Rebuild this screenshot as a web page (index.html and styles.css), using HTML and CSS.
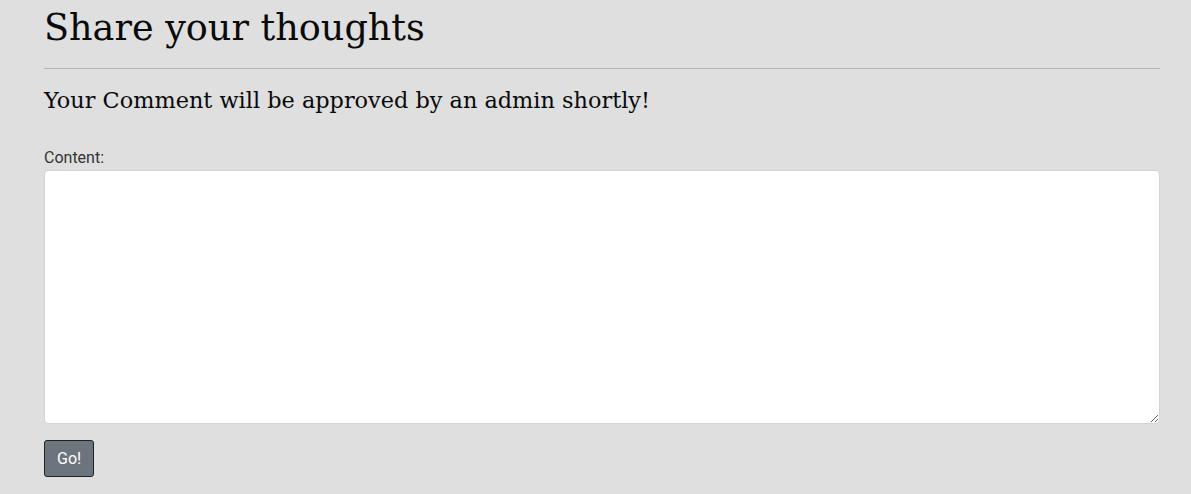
FILE: index.html
```html
<!DOCTYPE html>
<html>
<head>
<meta charset="utf-8">
<link rel="stylesheet" href="styles.css">
</head>
<body>
<div class="container">
  <h1 class="title">Share your thoughts</h1>
  <hr class="rule">
  <h4 class="subtitle">Your Comment will be approved by an admin shortly!</h4>
  <form class="form">
    <label class="label" for="content">Content:</label>
    <textarea id="content" class="textarea"></textarea>
    <button type="button" class="btn">Go!</button>
  </form>
</div>
</body>
</html>
```
FILE: styles.css
```css
html, body {
  margin: 0;
  padding: 0;
  background: #dfdfdf;
}
.container {
  padding: 0 31px 0 44px;
}
.title {
  font-family: "DejaVu Serif", serif;
  font-weight: 400;
  font-size: 36.6px;
  line-height: 44px;
  color: #0a0a0a;
  margin: 6px 0 0 0;
}
.rule {
  border: 0;
  border-top: 1px solid #b3b3b3;
  margin: 18px 0 0 0;
}
.subtitle {
  font-family: "DejaVu Serif", serif;
  font-weight: 400;
  font-size: 22.4px;
  line-height: 1.2;
  color: #0a0a0a;
  margin: 18px 0 34px 0;
}
.form {
  display: flex;
  flex-direction: column;
  align-items: flex-start;
}
.label {
  font-family: Roboto, "Liberation Sans", sans-serif;
  font-size: 16px;
  line-height: 19px;
  color: #333;
  margin-bottom: 3px;
}
.textarea {
  box-sizing: border-box;
  width: 100%;
  height: 254px;
  border: 1px solid #ced4da;
  border-radius: 4px;
  background: #fff;
  margin: 0;
}
.btn {
  margin-top: 16px;
  background: #6c757d;
  color: #fff;
  border: 1px solid #222;
  border-radius: 3px;
  font-family: Roboto, "Liberation Sans", sans-serif;
  font-size: 16px;
  padding: 8px 12px;
  line-height: 19px;
}
```
